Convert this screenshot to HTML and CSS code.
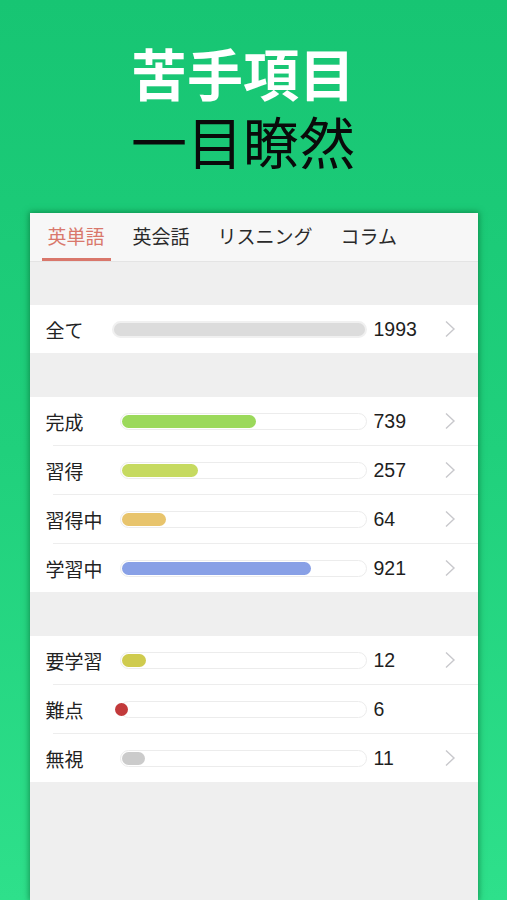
FILE: index.html
```html
<!DOCTYPE html>
<html lang="ja">
<head>
<meta charset="utf-8">
<link rel="stylesheet" href="styles.css">
</head>
<body>
<header class="hero">
  <div class="hero-line hero-white">苦手項目</div>
  <div class="hero-line hero-black">一目瞭然</div>
</header>
<main class="card">
  <nav class="tabs">
    <div class="tab active">英単語</div>
    <div class="tab">英会話</div>
    <div class="tab">リスニング</div>
    <div class="tab">コラム</div>
  </nav>
  <section class="group">
    <div class="row row-all">
      <span class="label">全て</span>
      <span class="track track-full"></span>
      <span class="num">1993</span>
      <svg class="chev" viewBox="0 0 12 18" width="12" height="18"><path d="M2 1.5 L10 9 L2 16.5" fill="none" stroke="#c8c8cc" stroke-width="1.4"/></svg>
    </div>
  </section>
  <section class="group">
    <div class="row">
      <span class="label">完成</span>
      <span class="track"><span class="fill c-green" style="width:134px"></span></span>
      <span class="num">739</span>
      <svg class="chev" viewBox="0 0 12 18" width="12" height="18"><path d="M2 1.5 L10 9 L2 16.5" fill="none" stroke="#c8c8cc" stroke-width="1.4"/></svg>
    </div>
    <div class="row">
      <span class="label">習得</span>
      <span class="track"><span class="fill c-lime" style="width:76px"></span></span>
      <span class="num">257</span>
      <svg class="chev" viewBox="0 0 12 18" width="12" height="18"><path d="M2 1.5 L10 9 L2 16.5" fill="none" stroke="#c8c8cc" stroke-width="1.4"/></svg>
    </div>
    <div class="row">
      <span class="label">習得中</span>
      <span class="track"><span class="fill c-orange" style="width:44px"></span></span>
      <span class="num">64</span>
      <svg class="chev" viewBox="0 0 12 18" width="12" height="18"><path d="M2 1.5 L10 9 L2 16.5" fill="none" stroke="#c8c8cc" stroke-width="1.4"/></svg>
    </div>
    <div class="row">
      <span class="label">学習中</span>
      <span class="track"><span class="fill c-blue" style="width:189px"></span></span>
      <span class="num">921</span>
      <svg class="chev" viewBox="0 0 12 18" width="12" height="18"><path d="M2 1.5 L10 9 L2 16.5" fill="none" stroke="#c8c8cc" stroke-width="1.4"/></svg>
    </div>
  </section>
  <section class="group">
    <div class="row">
      <span class="label">要学習</span>
      <span class="track"><span class="fill c-olive" style="width:24px"></span></span>
      <span class="num">12</span>
      <svg class="chev" viewBox="0 0 12 18" width="12" height="18"><path d="M2 1.5 L10 9 L2 16.5" fill="none" stroke="#c8c8cc" stroke-width="1.4"/></svg>
    </div>
    <div class="row">
      <span class="label">難点</span>
      <span class="track"><span class="dot"></span></span>
      <span class="num">6</span>
      <span class="chev"></span>
    </div>
    <div class="row">
      <span class="label">無視</span>
      <span class="track"><span class="fill c-gray" style="width:23px"></span></span>
      <span class="num">11</span>
      <svg class="chev" viewBox="0 0 12 18" width="12" height="18"><path d="M2 1.5 L10 9 L2 16.5" fill="none" stroke="#c8c8cc" stroke-width="1.4"/></svg>
    </div>
  </section>
</main>
</body>
</html>
```

FILE: styles.css
```css
html, body {
  margin: 0;
  padding: 0;
}
body {
  width: 507px;
  height: 900px;
  overflow: hidden;
  background: linear-gradient(180deg, #17c573 0%, #20d07c 50%, #2ee08b 100%);
  font-family: "Noto Sans CJK JP", "Liberation Sans", sans-serif;
  display: flex;
  flex-direction: column;
}
.hero {
  padding: 38px 0 0 131px;
  height: 173px;
  box-sizing: border-box;
}
.hero-line {
  font-size: 56px;
  line-height: 68px;
  height: 68px;
  letter-spacing: 0;
}
.hero-white {
  color: #ffffff;
  font-weight: 700;
}
.hero-black {
  color: #0a0a0a;
  font-weight: 400;
}
.card {
  margin: 40px auto 0;
  width: 448px;
  flex: 1;
  background: #efefef;
  box-shadow: 0 0 6px 1px rgba(0, 90, 40, 0.55);
}
.tabs {
  display: flex;
  gap: 16px;
  height: 48px;
  padding: 0 12px;
  background: #f7f7f7;
  border-bottom: 1px solid #e4e4e4;
}
.tab {
  padding: 0 6px;
  font-size: 19px;
  line-height: 46px;
  color: #2a2a2a;
  border-bottom: 3px solid transparent;
  box-sizing: border-box;
  height: 48px;
}
.tab.active {
  color: #d9776b;
  border-bottom-color: #d9776b;
}
.group {
  margin-top: 44px;
  background: #ffffff;
}
.group:first-of-type {
  margin-top: 43px;
}
.row {
  display: grid;
  grid-template-columns: 67px 247px 63px 12px;
  column-gap: 7px;
  align-items: center;
  height: 48px;
  padding-left: 16px;
}
.row + .row {
  height: 49px;
  padding-top: 1px;
  box-sizing: border-box;
  background: linear-gradient(#ededed, #ededed) no-repeat 23px 0 / calc(100% - 23px) 1px;
}
.row-all {
  grid-template-columns: 59px 255px 63px 12px;
}
.label {
  font-size: 19px;
  color: #222222;
  white-space: nowrap;
}
.num {
  font-family: "Liberation Sans", "Noto Sans CJK JP", sans-serif;
  font-size: 19.5px;
  color: #1e1e1e;
}
.track {
  height: 17px;
  box-sizing: border-box;
  border: 1px solid #ececec;
  border-radius: 9px;
  background: #ffffff;
  padding: 1px;
  display: flex;
  align-items: center;
  position: relative;
}
.track-full {
  background: #dcdcdc;
  border: 2px solid #f0f0f0;
}
.fill {
  height: 13px;
  border-radius: 7px;
  display: block;
}
.dot {
  position: absolute;
  left: -6px;
  top: 1px;
  width: 13px;
  height: 13px;
  border-radius: 50%;
  background: #c23a3b;
}
.c-green { background: #9bd95b; }
.c-lime { background: #c6da60; }
.c-orange { background: #e8c46c; }
.c-blue { background: #88a0e6; }
.c-olive { background: #cfcb4e; }
.c-gray { background: #cbcbcb; }
.chev {
  display: block;
  width: 12px;
  height: 18px;
}
```
